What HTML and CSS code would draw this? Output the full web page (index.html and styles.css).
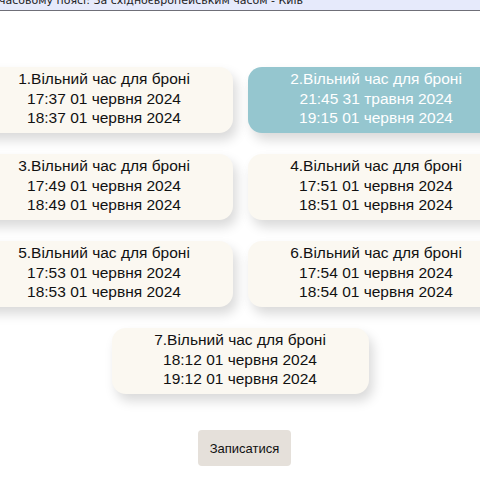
FILE: index.html
```html
<!DOCTYPE html>
<html lang="uk">
<head>
<meta charset="utf-8">
<link rel="stylesheet" href="styles.css">
</head>
<body>
<div class="tzbar"><span class="tztext">часовому поясі: За східноєвропейським часом - Київ</span></div>
<div class="stage">
  <div class="slots">
    <div class="slot">1.Вільний час для броні<br>17:37 01 червня 2024<br>18:37 01 червня 2024</div>
    <div class="slot selected">2.Вільний час для броні<br>21:45 31 травня 2024<br>19:15 01 червня 2024</div>
    <div class="slot">3.Вільний час для броні<br>17:49 01 червня 2024<br>18:49 01 червня 2024</div>
    <div class="slot">4.Вільний час для броні<br>17:51 01 червня 2024<br>18:51 01 червня 2024</div>
    <div class="slot">5.Вільний час для броні<br>17:53 01 червня 2024<br>18:53 01 червня 2024</div>
    <div class="slot">6.Вільний час для броні<br>17:54 01 червня 2024<br>18:54 01 червня 2024</div>
    <div class="slot">7.Вільний час для броні<br>18:12 01 червня 2024<br>19:12 01 червня 2024</div>
  </div>
</div>
<div class="actions"><button class="book">Записатися</button></div>
</body>
</html>
```
FILE: styles.css
```css
html, body {
  margin: 0;
  padding: 0;
  overflow: hidden;
  background: #ffffff;
}
.tzbar {
  height: 10px;
  background: #e6eafb;
  border-bottom: 1px solid #6f6f78;
  overflow: hidden;
  white-space: nowrap;
}
.tztext {
  display: block;
  margin-top: -6px;
  margin-left: -1px;
  font-family: "DejaVu Sans", Tahoma, sans-serif;
  font-size: 11px;
  line-height: 14px;
  color: #222;
}
.stage {
  display: flex;
  justify-content: center;
  padding-top: 56px;
}
.slots {
  flex: none;
  width: 529px;
  display: flex;
  flex-wrap: wrap;
  justify-content: center;
  gap: 21px 15px;
}
.slot {
  box-sizing: border-box;
  width: 257px;
  height: 66px;
  padding-top: 2px;
  border-radius: 14px;
  background: #fbf8f1;
  box-shadow: 4px 7px 12px rgba(0, 0, 0, 0.15);
  text-align: center;
  font-family: "Liberation Sans", Arial, sans-serif;
  font-size: 15.5px;
  line-height: 19.5px;
  color: #111;
}
.slot.selected {
  background: #95c6cf;
  color: #ffffff;
}
.actions {
  display: flex;
  justify-content: center;
  padding-top: 36px;
  padding-left: 9px;
}
.book {
  width: 93px;
  height: 36px;
  border: none;
  border-radius: 4px;
  background: #e5e0da;
  font-family: "Liberation Sans", Arial, sans-serif;
  font-size: 13px;
  color: #111;
  padding: 0;
}
```
